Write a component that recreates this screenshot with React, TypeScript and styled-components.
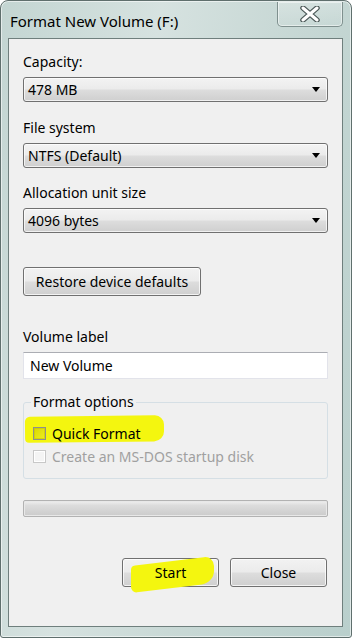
import React from 'react'
import styled, { createGlobalStyle } from 'styled-components'

const GlobalStyle = createGlobalStyle`
  html, body {
    margin: 0;
    padding: 0;
    background: #ffffff;
  }
  body {
    font-family: "Noto Sans", "Open Sans", "DejaVu Sans", sans-serif;
  }
`

const Frame = styled.div`
  width: 352px;
  height: 638px;
  box-sizing: border-box;
  display: flex;
  flex-direction: column;
  border: 1px solid #5f6f6d;
  border-radius: 8px 8px 3px 3px;
  background: linear-gradient(100deg, #c3d5d2 0%, #d6e2e0 35%, #c9d9d6 60%, #b9cfcc 100%);
  padding: 0 8px 10px 7px;
  box-shadow: inset 0 0 0 1px rgba(255, 255, 255, 0.55);
`

const TitleBar = styled.div`
  height: 37px;
  display: flex;
  align-items: flex-start;
  justify-content: space-between;
`

const Title = styled.div`
  padding-top: 10px;
  padding-left: 2px;
  font-size: 15px;
  color: #000000;
`

const CloseCaption = styled.div`
  width: 66px;
  height: 25px;
  margin-top: 1px;
  box-sizing: border-box;
  border: 1px solid #7f908e;
  border-top: none;
  border-radius: 0 0 5px 5px;
  background: linear-gradient(180deg, rgba(255, 255, 255, 0.25), rgba(255, 255, 255, 0.05));
  box-shadow: inset 0 0 0 1px rgba(255, 255, 255, 0.5);
  display: flex;
  align-items: center;
  justify-content: center;
`

const Client = styled.div`
  flex: 1;
  box-sizing: border-box;
  border: 1px solid #6f7f7d;
  background: #f0f0f0;
  padding: 0 14px 0 14px;
  display: flex;
  flex-direction: column;
  font-size: 14px;
  color: #000000;
`

const Label = styled.div<{ $top: number }>`
  height: 20px;
  line-height: 20px;
  margin-top: ${({ $top }) => $top}px;
  margin-bottom: 5px;
`

const Select = styled.div`
  height: 25px;
  box-sizing: border-box;
  border: 1px solid #707070;
  border-radius: 3px;
  background: linear-gradient(180deg, #f3f3f3 0%, #ebebeb 48%, #dddddd 52%, #cfcfcf 100%);
  box-shadow: inset 0 0 0 1px rgba(255, 255, 255, 0.7);
  display: flex;
  align-items: center;
  justify-content: space-between;
  padding: 0 7px 0 4px;
`

const Arrow = styled.span`
  width: 0;
  height: 0;
  border-left: 4px solid transparent;
  border-right: 4px solid transparent;
  border-top: 5px solid #000000;
`

const PushButton = styled.div<{ $width: number }>`
  position: relative;
  width: ${({ $width }) => $width}px;
  height: 29px;
  box-sizing: border-box;
  border: 1px solid #707070;
  border-radius: 3px;
  background: linear-gradient(180deg, #f2f2f2 0%, #ebebeb 48%, #dddddd 52%, #cfcfcf 100%);
  box-shadow: inset 0 0 0 1px rgba(255, 255, 255, 0.75);
  display: flex;
  align-items: center;
  justify-content: center;
  font-size: 14px;
`

const RestoreButton = styled(PushButton)`
  margin-top: 34px;
`

const TextBox = styled.div`
  height: 27px;
  box-sizing: border-box;
  border: 1px solid #e2e3ea;
  border-top-color: #abadb3;
  background: #ffffff;
  display: flex;
  align-items: center;
  padding-left: 6px;
`

const Group = styled.fieldset`
  margin: 13px 0 0 0;
  padding: 11px 8px 12px 8px;
  border: 1px solid #d5dfe5;
  border-radius: 3px;
  display: flex;
  flex-direction: column;
  gap: 3px;
  min-width: 0;
`

const Legend = styled.legend`
  padding: 0 2px;
  margin-left: -1px;
  line-height: 20px;
`

const CheckRow = styled.div<{ $disabled?: boolean; $marked?: boolean }>`
  position: relative;
  height: 20px;
  display: flex;
  align-items: center;
  gap: 6px;
  padding-left: 1px;
  color: ${({ $disabled }) => ($disabled ? '#a0a0a0' : '#000000')};

  &::before {
    content: '';
    display: ${({ $marked }) => ($marked ? 'block' : 'none')};
    position: absolute;
    left: -7px;
    top: -7px;
    width: 139px;
    height: 26px;
    background: #f4f60f;
    border-radius: 5px 9px 10px 4px;
    transform: rotate(-0.6deg);
  }
`

const Box = styled.span<{ $disabled?: boolean }>`
  position: relative;
  width: 13px;
  height: 13px;
  box-sizing: border-box;
  border: 1px solid ${({ $disabled }) => ($disabled ? '#c8c8c8' : '#8e8f8f')};
  background: ${({ $disabled }) =>
    $disabled ? '#f4f4f4' : 'linear-gradient(135deg, #d8d800 0%, #eeee20 100%)'};
  box-shadow: inset 0 0 0 1px ${({ $disabled }) => ($disabled ? '#ffffff' : 'rgba(200,200,0,0.6)')};
`

const CheckText = styled.span`
  position: relative;
`

const Progress = styled.div`
  margin-top: 21px;
  height: 17px;
  box-sizing: border-box;
  border: 1px solid #b2b2b2;
  border-radius: 2px;
  background: linear-gradient(180deg, #f0f0f0 0%, #dcdcdc 30%, #cbcbcb 100%);
  box-shadow: inset 0 0 0 1px #e8e8e8;
`

const Footer = styled.div`
  margin-top: 41px;
  display: flex;
  justify-content: flex-end;
  gap: 11px;
  padding-right: 1px;
`

const Marker = styled.span`
  position: absolute;
  left: 8px;
  top: 2px;
  width: 83px;
  height: 27px;
  background: #f4f60f;
  border-radius: 4px 10px 12px 6px;
  transform: skewY(-7deg);
`

const ButtonText = styled.span`
  position: relative;
`

const CloseGlyph = () => (
  <svg width="20" height="16" viewBox="0 0 20 16">
    <path d="M3 2 L17 14 M17 2 L3 14" stroke="#4b5857" strokeWidth="5.5" strokeLinecap="round" />
    <path d="M3 2 L17 14 M17 2 L3 14" stroke="#ffffff" strokeWidth="3" strokeLinecap="round" />
  </svg>
)

const Dropdown = ({ value }: { value: string }) => (
  <Select>
    <span>{value}</span>
    <Arrow />
  </Select>
)

export default function App() {
  return (
    <>
      <GlobalStyle />
      <Frame>
        <TitleBar>
          <Title>Format New Volume (F:)</Title>
          <CloseCaption>
            <CloseGlyph />
          </CloseCaption>
        </TitleBar>
        <Client>
          <Label $top={13}>Capacity:</Label>
          <Dropdown value="478 MB" />
          <Label $top={16}>File system</Label>
          <Dropdown value="NTFS (Default)" />
          <Label $top={15}>Allocation unit size</Label>
          <Dropdown value="4096 bytes" />
          <RestoreButton $width={178}>Restore device defaults</RestoreButton>
          <Label $top={31}>Volume label</Label>
          <TextBox>New Volume</TextBox>
          <Group>
            <Legend>Format options</Legend>
            <CheckRow $marked>
              <Box />
              <CheckText>Quick Format</CheckText>
            </CheckRow>
            <CheckRow $disabled>
              <Box $disabled />
              <CheckText>Create an MS-DOS startup disk</CheckText>
            </CheckRow>
          </Group>
          <Progress />
          <Footer>
            <PushButton $width={97}>
              <Marker />
              <ButtonText>Start</ButtonText>
            </PushButton>
            <PushButton $width={97}>Close</PushButton>
          </Footer>
        </Client>
      </Frame>
    </>
  )
}
